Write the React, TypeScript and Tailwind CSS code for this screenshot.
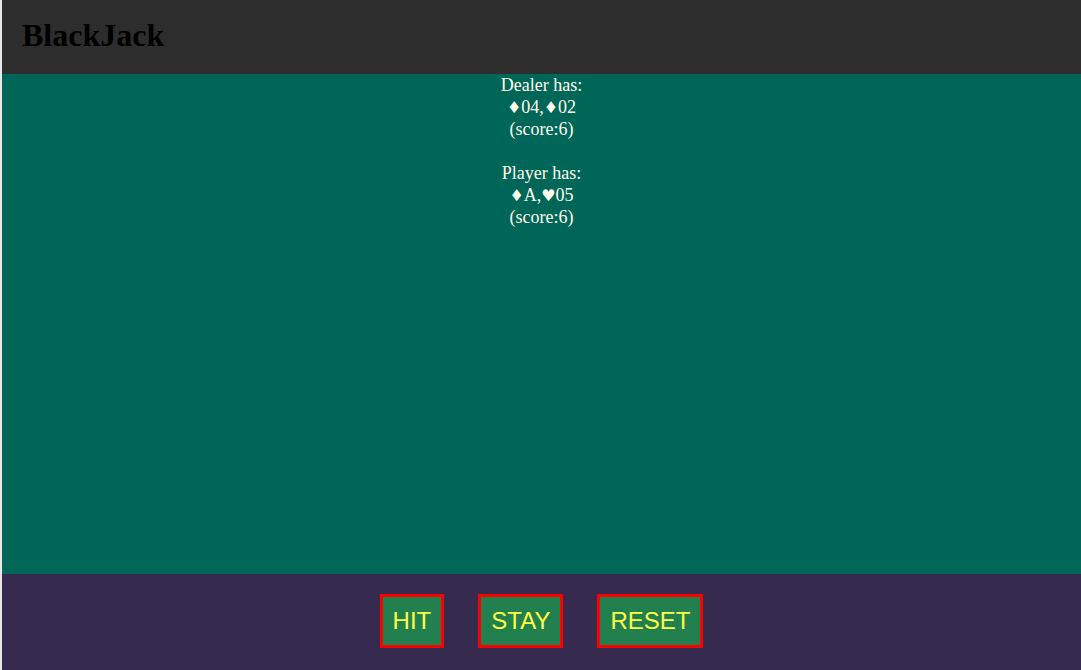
const dealer = ['♦04', '♦02']
const player = ['♦A', '♥05']

function Card({ card }: { card: string }) {
  return (
    <>
      <span className="font-['DejaVu_Sans',sans-serif] text-[16px] leading-none">{card[0]}</span>
      {card.slice(1)}
    </>
  )
}

function Hand({ label, cards, score }: { label: string; cards: string[]; score: number }) {
  return (
    <div>
      <div>{label} has:</div>
      <div>
        {cards.map((c, i) => (
          <span key={i}>
            {i > 0 && ','}
            <Card card={c} />
          </span>
        ))}
      </div>
      <div>(score:{score})</div>
    </div>
  )
}

export default function App() {
  return (
    <div className="flex h-[670px] w-full flex-col bg-[#e8e8e8] pl-[2px]">
      <header className="flex h-[74px] shrink-0 items-center bg-[#2d2d2d] px-5 pb-[5px]">
        <h1 className="font-['Liberation_Serif',serif] text-[32px] font-bold text-black">BlackJack</h1>
      </header>

      <main className="flex-1 bg-[#006657] text-center font-['Liberation_Serif',serif] text-[18px] leading-[22px] text-[#fffdf0]">
        <Hand label="Dealer" cards={dealer} score={6} />
        <div className="h-[22px]" />
        <Hand label="Player" cards={player} score={6} />
      </main>

      <footer className="flex h-[96px] shrink-0 items-start justify-center gap-[34px] bg-[#372a4f] pt-5">
        {['HIT', 'STAY', 'RESET'].map((b) => (
          <button
            key={b}
            className="border-[3px] border-[#ff0000] bg-[#22804f] px-[10px] py-[10px] font-['Liberation_Sans',sans-serif] text-[24px] leading-[28px] text-[#ffff44]"
          >
            {b}
          </button>
        ))}
      </footer>
    </div>
  )
}
